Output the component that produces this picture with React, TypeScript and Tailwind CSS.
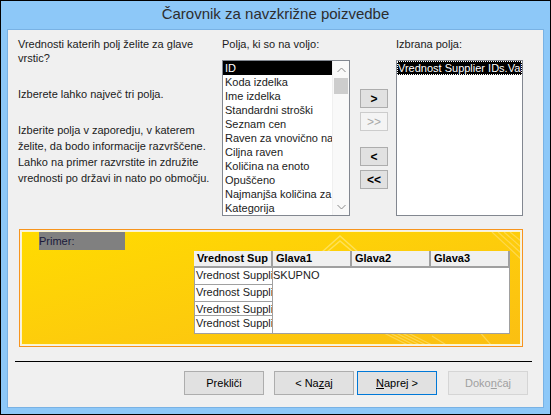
const fieldItems = [
  "ID",
  "Koda izdelka",
  "Ime izdelka",
  "Standardni stroški",
  "Seznam cen",
  "Raven za vnovično naročilo",
  "Ciljna raven",
  "Količina na enoto",
  "Opuščeno",
  "Najmanjša količina za vnovično naročilo",
  "Kategorija",
];

const rowHeights = ["h-[17px]", "h-[17px]", "h-[14px]", "h-[18px]"];

function MoveButton({ label, disabled }: { label: string; disabled?: boolean }) {
  return (
    <div
      className={
        disabled
          ? "w-[28px] h-[19px] flex items-center justify-center border border-[#cccccc] bg-[#f4f4f4] text-[#a8a8a8] text-[12px] leading-none"
          : "w-[28px] h-[19px] flex items-center justify-center border border-[#adadad] bg-[#e1e1e1] text-black text-[12px] leading-none font-bold"
      }
    >
      {label}
    </div>
  );
}

function Chevron({ up }: { up?: boolean }) {
  return (
    <svg width="9" height="6" viewBox="0 0 9 6" className="text-[#8a8a8a]">
      <path
        d={up ? "M0.5 5 L4.5 1 L8.5 5" : "M0.5 1 L4.5 5 L8.5 1"}
        fill="none"
        stroke="currentColor"
        strokeWidth="1"
      />
    </svg>
  );
}

function WizardButton({
  children,
  variant = "normal",
}: {
  children: React.ReactNode;
  variant?: "normal" | "default" | "disabled";
}) {
  const styles = {
    normal: "border-[#adadad] bg-[#e1e1e1] text-black",
    default: "border-[#0078d7] bg-[#e1e1e1] text-black",
    disabled: "border-[#d5d5d5] bg-[#eaeaea] text-[#a0a0a0]",
  };
  return (
    <div
      className={`w-[80px] h-[24px] flex items-center justify-center border text-[11px] ${styles[variant]}`}
    >
      {children}
    </div>
  );
}

export default function App() {
  return (
    <div
      className="w-[551px] h-[415px] border border-black bg-[#8dc8f8] flex flex-col text-[#1b1b1b]"
      style={{ fontFamily: '"Liberation Sans", Arial, sans-serif' }}
    >
      {/* title bar */}
      <div className="h-[28px] flex items-center justify-center text-[15px] text-[#2d2d2d] pb-[1px]">
        Čarovnik za navzkrižne poizvedbe
      </div>

      <div className="mx-[6px] mb-[6px] flex-1 border border-[#79b2e4] bg-[#f0f0f0] flex flex-col">
        {/* selection area */}
        <div className="h-[199px] flex pt-[7px] text-[11px]">
          <div className="w-[214px] pl-[10px]">
            <div className="w-[194px]">
              <p className="leading-[14px]">
                Vrednosti katerih polj želite za glave vrstic?
              </p>
              <p className="leading-[14px] mt-[22px]">Izberete lahko največ tri polja.</p>
              <p className="leading-[16px] mt-[21px]">
                Izberite polja v zaporedju, v katerem želite, da bodo informacije
                razvrščene. Lahko na primer razvrstite in združite vrednosti po
                državi in nato po območju.
              </p>
            </div>
          </div>

          <div className="w-[128px] flex flex-col">
            <div className="leading-[14px] h-[23px]">Polja, ki so na voljo:</div>
            <div className="w-[128px] h-[156px] border border-[#828790] bg-white flex">
              <div className="flex-1 min-w-0 flex flex-col">
                {fieldItems.map((item, i) => (
                  <div
                    key={item}
                    className={`h-[14px] leading-[14px] pl-[2px] whitespace-nowrap overflow-hidden ${
                      i === 0 ? "bg-black text-white" : ""
                    }`}
                  >
                    {item}
                  </div>
                ))}
              </div>
              <div className="w-[17px] border-l border-[#f0f0f0] bg-[#f9f9f9] flex flex-col">
                <div className="h-[17px] flex items-center justify-center">
                  <Chevron up />
                </div>
                <div className="flex-1 px-[1px]">
                  <div className="h-[16px] bg-[#cdcdcd]" />
                </div>
                <div className="h-[17px] flex items-center justify-center">
                  <Chevron />
                </div>
              </div>
            </div>
          </div>

          <div className="w-[28px] ml-[10px] flex flex-col pt-[52px]">
            <MoveButton label=">" />
            <div className="mt-[4px]">
              <MoveButton label=">>" disabled />
            </div>
            <div className="mt-[16px]">
              <MoveButton label="<" />
            </div>
            <div className="mt-[4px]">
              <MoveButton label="<<" />
            </div>
          </div>

          <div className="w-[127px] ml-[8px] flex flex-col">
            <div className="leading-[14px] h-[23px]">Izbrana polja:</div>
            <div className="w-[127px] h-[156px] border border-[#828790] bg-white">
              <div className="h-[14px] leading-[12px] bg-black text-white whitespace-nowrap overflow-hidden border border-dotted border-white">
                Vrednost Supplier IDs.Value
              </div>
            </div>
          </div>
        </div>

        {/* sample preview */}
        <div className="relative ml-[11px] w-[504px] h-[118px] border border-[#f7941d] p-px">
          <div className="relative h-full border border-[#fff5c8] bg-gradient-to-br from-[#ffdb00] to-[#fbbf12] overflow-hidden text-[11px]">
            <svg
              className="absolute inset-0"
              width="500"
              height="114"
              viewBox="0 0 500 114"
            >
              <g fill="none" stroke="#ffe97a" strokeWidth="1.5" opacity="0.7">
                <path d="M300 20 L318 4 L336 20" />
                <path d="M305 20 L318 9 L331 20" />
              </g>
              <g stroke="#ffe27a" strokeWidth="1.2" opacity="0.6">
                <path d="M388 114 L352 96" />
                <path d="M394 114 L358 96" />
                <path d="M400 114 L364 96" />
                <path d="M406 114 L370 96" />
                <path d="M412 114 L376 96" />
                <path d="M470 0 L500 28" />
                <path d="M476 0 L500 22" />
                <path d="M482 0 L500 16" />
                <path d="M488 0 L500 10" />
                <path d="M410 104 L426 114" />
                <path d="M440 80 L470 114" />
              </g>
            </svg>

            <div className="relative flex flex-col">
              <div className="ml-[17px] w-[86px] h-[18px] bg-[#808080] leading-[18px] text-[#1a1a3a]">
                Primer:
              </div>

              {/* crosstab */}
              <div className="ml-[172px] mt-px w-[316px] flex flex-col">
                <div className="h-[17px] flex font-bold text-black">
                  <div className="w-[79px] bg-[#f0f0f0] border-r-2 border-b-2 border-[#a0a0a0] pl-[3px] leading-[15px] whitespace-nowrap overflow-hidden">
                    Vrednost Sup
                  </div>
                  <div className="w-[79px] bg-[#f0f0f0] border-r-2 border-b-2 border-[#a0a0a0] pl-[3px] leading-[15px]">
                    Glava1
                  </div>
                  <div className="w-[79px] bg-[#f0f0f0] border-r-2 border-b-2 border-[#a0a0a0] pl-[3px] leading-[15px]">
                    Glava2
                  </div>
                  <div className="w-[79px] bg-[#f0f0f0] border-r-2 border-b-2 border-[#a0a0a0] pl-[3px] leading-[15px]">
                    Glava3
                  </div>
                </div>
                <div className="flex">
                  <div className="w-[79px] flex flex-col">
                    {rowHeights.map((h, i) => (
                      <div
                        key={i}
                        className={`${h} bg-white border border-t-0 border-[#a0a0a0] pl-px leading-[15px] whitespace-nowrap overflow-hidden`}
                      >
                        Vrednost Supplie
                      </div>
                    ))}
                  </div>
                  <div className="flex-1 h-[66px] bg-white border border-t-0 border-l-0 border-[#a0a0a0] leading-[15px]">
                    SKUPNO
                  </div>
                </div>
              </div>
            </div>
          </div>
        </div>

        <div className="ml-[7px] mt-[14px] w-[517px] h-px bg-black" />

        {/* footer buttons */}
        <div className="mt-[9px] flex pl-[176px]">
          <WizardButton>Prekliči</WizardButton>
          <div className="ml-[10px]">
            <WizardButton>
              &lt; Na<span className="underline">z</span>aj
            </WizardButton>
          </div>
          <div className="ml-[3px]">
            <WizardButton variant="default">
              <span className="underline">N</span>aprej &gt;
            </WizardButton>
          </div>
          <div className="ml-[11px]">
            <WizardButton variant="disabled">
              Doko<span className="underline">n</span>čaj
            </WizardButton>
          </div>
        </div>
      </div>
    </div>
  );
}
